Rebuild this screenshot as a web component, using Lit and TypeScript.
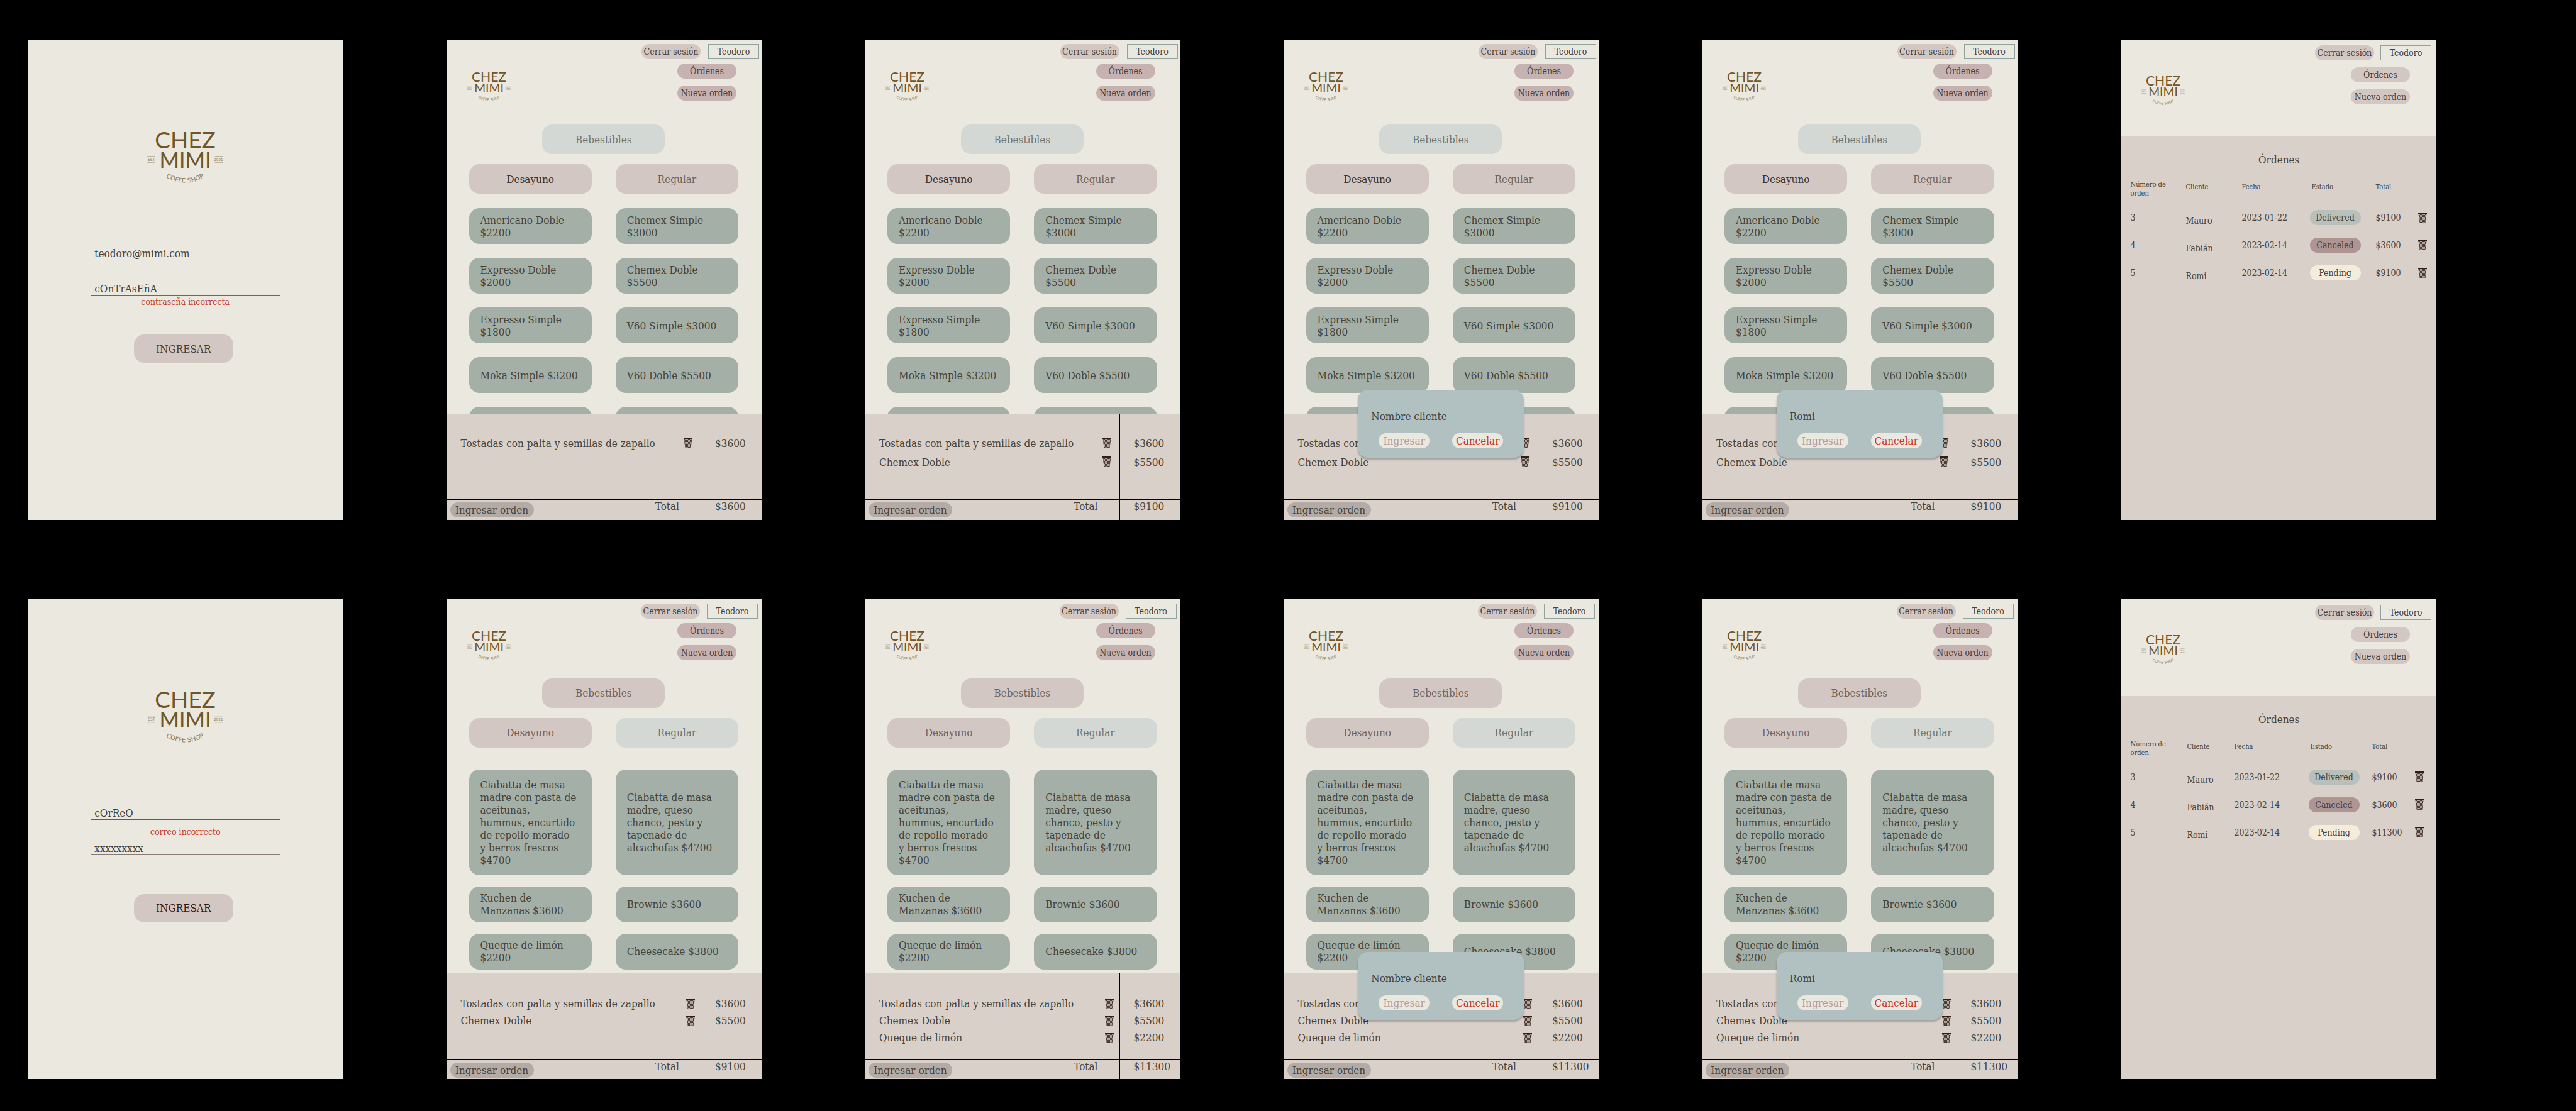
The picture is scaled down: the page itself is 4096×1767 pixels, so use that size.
import { LitElement, html, css, nothing } from "lit";
import { customElement, property } from "lit/decorators.js";
import { classMap } from "lit/directives/class-map.js";

/* Shared look of text and controls, used by every screen. */
const base = css`
  :host {
    display: flex;
    flex-direction: column;
    height: 100%;
    background: #ebe8e0;
    color: #45433c;
    font-family: "DejaVu Serif Condensed", "DejaVu Serif", serif;
    font-size: 17px;
    line-height: 20px;
  }
  *,
  *::before {
    box-sizing: border-box;
  }
  button,
  input {
    margin: 0;
    padding: 0;
    border: 0;
    border-radius: 0;
    background: none;
    color: inherit;
    font: inherit;
    outline: none;
  }
  button {
    cursor: pointer;
    white-space: nowrap;
  }
  ul {
    margin: 0;
    padding: 0;
    list-style: none;
  }
  bin-icon {
    display: block;
    width: 14px;
  }
`;

@customElement("brand-logo")
export class BrandLogo extends LitElement {
  static styles = css`
    :host {
      display: block;
    }
    svg {
      display: block;
      width: 100%;
      overflow: visible;
    }
    .name {
      font-family: Lato, sans-serif;
      fill: #70562b;
    }
    .small {
      font-family: "DejaVu Sans", sans-serif;
      fill: #8b774f;
    }
    .rule {
      stroke: #a39678;
      stroke-width: 4;
    }
  `;
  render() {
    return html`<svg viewBox="20 20 542 372" role="img" aria-label="Chez Mimi">
      <path id="arc" d="M120 330 A258 258 0 0 0 460 330" fill="none" />
      <text class="name" x="291" y="150" font-size="166" text-anchor="middle">CHEZ</text>
      <text class="name" x="291" y="290" font-size="152" text-anchor="middle">MIMI</text>
      <path class="rule" d="M21 207H78M21 252H78M503 207H560M503 252H560" />
      <text class="small" x="50" y="239" font-size="27" text-anchor="middle">EST</text>
      <text class="small" x="528" y="239" font-size="25" text-anchor="middle">2021</text>
      <text class="small" font-size="45" text-anchor="middle">
        <textPath href="#arc" startOffset="50%">COFFE SHOP</textPath>
      </text>
    </svg>`;
  }
}

@customElement("bin-icon")
export class BinIcon extends LitElement {
  static styles = css`
    svg {
      display: block;
      width: 100%;
    }
  `;
  render() {
    return html`<svg viewBox="0 0 21 25" aria-hidden="true">
      <defs>
        <pattern id="mesh" width="3" height="3" patternUnits="userSpaceOnUse">
          <path d="M0 0H1.5V1.5H3V3H1.5V1.5H0Z" fill="#4e3d35" />
        </pattern>
      </defs>
      <path d="M1 3H20L17 24H4Z" fill="#4e3d35" fill-opacity=".3" />
      <path d="M1 3H20L17 24H4Z" fill="url(#mesh)" />
      <path d="M1.5 3L4.5 24M19.500 3L16.500 24" stroke="#5c4a42" stroke-width="1" />
      <path d="M0 0H21V3H0ZM4 23.800H17V25H4Z" fill="#2f1e16" />
    </svg>`;
  }
}

@customElement("login-screen")
export class LoginScreen extends LitElement {
  @property() user = "";
  @property() secret = "";
  @property() userError = "";
  @property() secretError = "";

  static styles = [
    base,
    css`
      .form {
        display: flex;
        flex-direction: column;
        align-items: center;
        padding-top: 144px;
      }
      brand-logo {
        width: 121px;
        margin-bottom: 103px;
      }
      .field {
        width: 60%;
        height: 56px;
      }
      .field.last {
        height: 83px;
      }
      .input {
        display: block;
        width: 100%;
        height: 21px;
        padding: 0 6px;
        border-bottom: 1px solid #8c7872;
      }
      .bad .input {
        border-color: #c8341f;
      }
      .last.bad .input {
        border-color: #6b6860;
      }
      .error {
        margin: 10px 0 0;
        color: #c73b26;
        font-size: 14px;
        line-height: 18px;
        text-align: center;
      }
      .last .error {
        margin-top: 1px;
      }
      .enter {
        width: 158px;
        height: 45px;
        margin-right: 6px;
        border-radius: 16px;
        background: #d3c7c3;
      }
      .ready {
        color: #2f1e16;
      }
    `,
  ];

  private field(name: string, value: string, error: string, last: boolean) {
    return html`<div class=${classMap({ field: true, last, bad: error !== "" })}>
      <input class="input" type="text" aria-label=${name} .value=${value} />
      ${error ? html`<p class="error">${error}</p>` : nothing}
    </div>`;
  }

  render() {
    return html`<form class="form">
      <brand-logo></brand-logo>
      ${this.field("Correo", this.user, this.userError, false)}
      ${this.field("Contraseña", this.secret, this.secretError, true)}
      <button class=${classMap({ enter: true, ready: this.userError !== "" })} type="button">
        INGRESAR
      </button>
    </form>`;
  }
}

@customElement("top-bar")
export class TopBar extends LitElement {
  static styles = [
    base,
    css`
      :host {
        height: auto;
        padding-top: var(--bar-top, 7px);
        font-size: 14px;
      }
      .session {
        display: flex;
        justify-content: flex-end;
        gap: var(--bar-gap, 12px);
        padding-right: var(--bar-right, 4px);
      }
      .pill {
        width: 94px;
        height: 24px;
        border-radius: 12px;
        background: #d3c7c3;
      }
      .user {
        width: 81px;
        height: 24px;
        border: 1px solid #8fa3a1;
        line-height: 22px;
        text-align: center;
      }
      .main {
        display: flex;
        align-items: flex-end;
        justify-content: space-between;
        padding: var(--nav-top, 7px) var(--nav-right, 40px) 0 33px;
      }
      brand-logo {
        width: 69px;
      }
      .nav {
        display: flex;
        flex-direction: column;
        gap: 11px;
      }
      .nav .pill {
        background: var(--nav-pill, #c6b2b0);
      }
    `,
  ];
  render() {
    return html`<div class="session">
        <button class="pill" type="button">Cerrar sesión</button>
        <div class="user">Teodoro</div>
      </div>
      <div class="main">
        <brand-logo></brand-logo>
        <nav class="nav">
          <button class="pill" type="button">Órdenes</button>
          <button class="pill" type="button">Nueva orden</button>
        </nav>
      </div>`;
  }
}

interface Line {
  name: string;
  price: string;
}

const DRINKS = [
  "Americano Doble\n$2200",
  "Chemex Simple\n$3000",
  "Expresso Doble\n$2000",
  "Chemex Doble\n$5500",
  "Expresso Simple\n$1800",
  "V60 Simple $3000",
  "Moka Simple $3200",
  "V60 Doble $5500",
  "",
  "",
];

const FOOD = [
  "Ciabatta de masa\nmadre con pasta de\naceitunas,\nhummus, encurtido\nde repollo morado\ny berros frescos\n$4700",
  "Ciabatta de masa\nmadre, queso\nchanco, pesto y\ntapenade de\nalcachofas $4700",
  "Kuchen de\nManzanas $3600",
  "Brownie $3600",
  "Queque de limón\n$2200",
  "Cheesecake $3800",
];

@customElement("menu-screen")
export class MenuScreen extends LitElement {
  @property() tab: "drinks" | "food" = "drinks";
  @property({ attribute: false }) lines: Line[] = [];
  @property() total = "";
  @property({ type: Boolean }) asking = false;
  @property() client = "";

  static styles = [
    base,
    css`
      :host {
        position: relative;
      }
      .food {
        --bar-gap: 11px;
        --bar-right: 6px;
      }
      .screen {
        display: flex;
        flex-direction: column;
        height: 100%;
      }
      .menu {
        flex: 1;
        min-height: 0;
        overflow: hidden;
        padding: 38px 37px 0 36px;
      }
      .food .menu {
        padding-top: 29px;
      }
      .tabs,
      .products {
        display: grid;
        grid-template-columns: 1fr 1fr;
        column-gap: 38px;
      }
      .tabs {
        row-gap: 16px;
        margin-bottom: 23px;
      }
      .food .tabs {
        margin-bottom: 35px;
      }
      .tab {
        height: 47px;
        border-radius: 16px;
        background: #d3c7c3;
        color: #6f6560;
      }
      .tab.wide {
        grid-column: span 2;
        justify-self: center;
        width: calc(50% - 19px);
      }
      .tab.on {
        background: #d3d8d4;
        color: #6f7672;
      }
      .tab.dark {
        color: #3a332d;
      }
      .products {
        row-gap: 22px;
      }
      .food .products {
        row-gap: 18px;
      }
      .product {
        width: 100%;
        height: 100%;
        min-height: 57px;
        padding: 0 18px;
        border-radius: 16px;
        background: #a4b0a7;
        text-align: left;
        white-space: pre;
      }
      .food .product {
        padding: 8px 18px;
      }
      .food .product.tall {
        padding: 14px 18px;
      }
      .panel {
        display: grid;
        grid-template-columns: 1fr 97px;
        grid-template-rows: 1fr 33px;
        height: 169px;
        background: #d9d0ca;
      }
      .food .panel {
        grid-template-rows: 1fr 31px;
      }
      .list {
        padding-top: 32px;
        line-height: 30px;
      }
      .food .list {
        padding-top: 36px;
        line-height: 27px;
      }
      .items {
        padding-left: 23px;
        padding-right: 13px;
      }
      .food .items {
        padding-right: 9px;
      }
      .item {
        display: flex;
        align-items: center;
        justify-content: space-between;
      }
      .amounts,
      .sum {
        padding-left: 22px;
        border-left: 1px solid #000;
      }
      .foot,
      .sum {
        border-top: 1px solid #000;
      }
      .foot {
        display: flex;
        align-items: flex-start;
        justify-content: space-between;
        padding: 0 34px 0 6px;
      }
      .send {
        width: 133px;
        height: 24px;
        margin-top: 4px;
        border-radius: 12px;
        background: #b4aba6;
      }
      .dialog {
        position: absolute;
        bottom: 99px;
        left: 0;
        right: 0;
        width: 264px;
        height: 108px;
        margin: 0 auto;
        padding: 32px 21px 0;
        border-radius: 16px;
        background: #b1c1c1;
        box-shadow: 0 3px 3px rgba(0, 0, 0, 0.25);
      }
      .food .dialog {
        bottom: 94px;
      }
      .name {
        display: block;
        width: 100%;
        height: 21px;
        border-bottom: 1px solid #8c7872;
      }
      .name::placeholder {
        color: #45433c;
        opacity: 1;
      }
      .choices {
        display: flex;
        justify-content: center;
        gap: 36px;
        padding-top: 16px;
      }
      .choice {
        width: 81px;
        height: 24px;
        border-radius: 12px;
        background: #ebe8e0;
        color: #b39c99;
      }
      .choice.cancel {
        color: #c8371f;
      }
    `,
  ];

  private tabButton(label: string, extra: Record<string, boolean>) {
    return html`<button class=${classMap({ tab: true, ...extra })} type="button">${label}</button>`;
  }

  private dialog() {
    return html`<div class="dialog" role="dialog" aria-label="Nombre cliente">
      <input
        class="name"
        type="text"
        aria-label="Nombre cliente"
        placeholder="Nombre cliente"
        .value=${this.client}
      />
      <div class="choices">
        <button class="choice" type="button">Ingresar</button>
        <button class="choice cancel" type="button">Cancelar</button>
      </div>
    </div>`;
  }

  render() {
    const food = this.tab === "food";
    const products = food ? FOOD : DRINKS;
    return html`<div class=${classMap({ screen: true, food })}>
      <top-bar></top-bar>
      <main class="menu">
        <div class="tabs">
          ${this.tabButton("Bebestibles", { wide: true, on: !food })}
          ${this.tabButton("Desayuno", { dark: !food })}
          ${this.tabButton("Regular", { on: food })}
        </div>
        <ul class="products">
          ${products.map(
            (text) => html`<li>
              <button
                class=${classMap({ product: true, tall: text.split("\n").length > 2 })}
                type="button"
              >${text}</button>
            </li>`,
          )}
        </ul>
      </main>
      <section class="panel">
        <ul class="list items">
          ${this.lines.map(
            (line) => html`<li class="item">
              ${line.name}
              <button type="button" aria-label="Eliminar"><bin-icon></bin-icon></button>
            </li>`,
          )}
        </ul>
        <ul class="list amounts">
          ${this.lines.map((line) => html`<li>${line.price}</li>`)}
        </ul>
        <div class="foot">
          <button class="send" type="button">Ingresar orden</button>
          <span>Total</span>
        </div>
        <div class="sum">${this.total}</div>
      </section>
      ${this.asking ? this.dialog() : nothing}
    </div>`;
  }
}

@customElement("orders-screen")
export class OrdersScreen extends LitElement {
  @property() lastTotal = "";
  @property({ type: Boolean }) compact = false;

  static styles = [
    base,
    css`
      top-bar {
        --bar-top: 9px;
        --bar-gap: 10px;
        --bar-right: 7px;
        --nav-top: 11px;
        --nav-right: 41px;
        --nav-pill: #d3c7c3;
      }
      .panel {
        flex: 1;
        margin-top: 51px;
        padding: 27px 13px 0 16px;
        background: #d9d0ca;
      }
      .compact .panel {
        padding-right: 18px;
      }
      .screen {
        display: flex;
        flex: 1;
        flex-direction: column;
      }
      .title {
        margin: 0 0 23px;
        font-size: 17px;
        font-weight: normal;
        text-align: center;
      }
      .compact .title {
        margin-right: -5px;
      }
      .table {
        width: 100%;
        border-collapse: collapse;
        table-layout: fixed;
        font-size: 14px;
        text-align: left;
      }
      .table th {
        height: 37px;
        padding: 4px 0 0;
        font-size: 11px;
        font-weight: normal;
        line-height: 14px;
        vertical-align: top;
      }
      .table th.number {
        padding: 0;
      }
      .table th.state {
        padding-left: 3px;
      }
      .table td {
        height: 44px;
        padding: 0;
      }
      .table td.client {
        padding-top: 9px;
      }
      .remove {
        display: block;
      }
      .c-number {
        width: 88px;
      }
      .c-client {
        width: 89px;
      }
      .c-date {
        width: 108px;
      }
      .c-state {
        width: 105px;
      }
      .compact .c-number {
        width: 90px;
      }
      .compact .c-client {
        width: 75px;
      }
      .compact .c-date {
        width: 118px;
      }
      .compact .c-state {
        width: 101px;
      }
      .c-bin {
        width: 15px;
      }
      .chip {
        display: block;
        width: 81px;
        border-radius: 12px;
        line-height: 24px;
        text-align: center;
      }
      .Delivered {
        background: #b8c0b9;
      }
      .Canceled {
        background: #ae9594;
      }
      .Pending {
        background: #f5ecdc;
      }
    `,
  ];

  render() {
    const rows = [
      ["3", "Mauro", "2023-01-22", "Delivered", "$9100"],
      ["4", "Fabián", "2023-02-14", "Canceled", "$3600"],
      ["5", "Romi", "2023-02-14", "Pending", this.lastTotal],
    ];
    return html`<div class=${classMap({ screen: true, compact: this.compact })}>
      <top-bar></top-bar>
      <section class="panel">
        <h2 class="title">Órdenes</h2>
        <table class="table">
          <colgroup>
            <col class="c-number" />
            <col class="c-client" />
            <col class="c-date" />
            <col class="c-state" />
            <col />
            <col class="c-bin" />
          </colgroup>
          <thead>
            <tr>
              <th class="number" scope="col">Número de<br />orden</th>
              <th scope="col">Cliente</th>
              <th scope="col">Fecha</th>
              <th class="state" scope="col">Estado</th>
              <th scope="col">Total</th>
              <th></th>
            </tr>
          </thead>
          <tbody>
            ${rows.map(
              ([number, client, date, state, total]) => html`<tr>
                <td>${number}</td>
                <td class="client">${client}</td>
                <td>${date}</td>
                <td><span class="chip ${state}">${state}</span></td>
                <td>${total}</td>
                <td>
                  <button class="remove" type="button" aria-label="Eliminar">
                    <bin-icon></bin-icon>
                  </button>
                </td>
              </tr>`,
            )}
          </tbody>
        </table>
      </section>
    </div>`;
  }
}

const TOAST: Line = { name: "Tostadas con palta y semillas de zapallo", price: "$3600" };
const CHEMEX: Line = { name: "Chemex Doble", price: "$5500" };
const CAKE: Line = { name: "Queque de limón", price: "$2200" };

@customElement("app-root")
export class AppRoot extends LitElement {
  static styles = css`
    :host {
      display: block;
      min-height: 100vh;
      box-sizing: border-box;
      background: #000;
    }
    .board {
      display: grid;
      grid-template-columns: repeat(6, 1fr);
      gap: 126px 164px;
      padding: 63px 223px 0 44px;
    }
    .phone {
      aspect-ratio: 744 / 1133;
      overflow: hidden;
    }
  `;

  private menu(tab: string, lines: Line[], total: string, asking = false, client = "") {
    return html`<div class="phone">
      <menu-screen
        .tab=${tab}
        .lines=${lines}
        .total=${total}
        .asking=${asking}
        .client=${client}
      ></menu-screen>
    </div>`;
  }

  render() {
    const two = [TOAST, CHEMEX];
    const three = [TOAST, CHEMEX, CAKE];
    return html`<div class="board">
      <div class="phone">
        <login-screen
          user="teodoro@mimi.com"
          secret="cOnTrAsEñA"
          .secretError=${"contraseña incorrecta"}
        ></login-screen>
      </div>
      ${this.menu("drinks", [TOAST], "$3600")}
      ${this.menu("drinks", two, "$9100")}
      ${this.menu("drinks", two, "$9100", true)}
      ${this.menu("drinks", two, "$9100", true, "Romi")}
      <div class="phone"><orders-screen .lastTotal=${"$9100"}></orders-screen></div>
      <div class="phone">
        <login-screen
          user="cOrReO"
          secret="xxxxxxxxx"
          .userError=${"correo incorrecto"}
        ></login-screen>
      </div>
      ${this.menu("food", two, "$9100")}
      ${this.menu("food", three, "$11300")}
      ${this.menu("food", three, "$11300", true)}
      ${this.menu("food", three, "$11300", true, "Romi")}
      <div class="phone"><orders-screen .lastTotal=${"$11300"} compact></orders-screen></div>
    </div>`;
  }
}
